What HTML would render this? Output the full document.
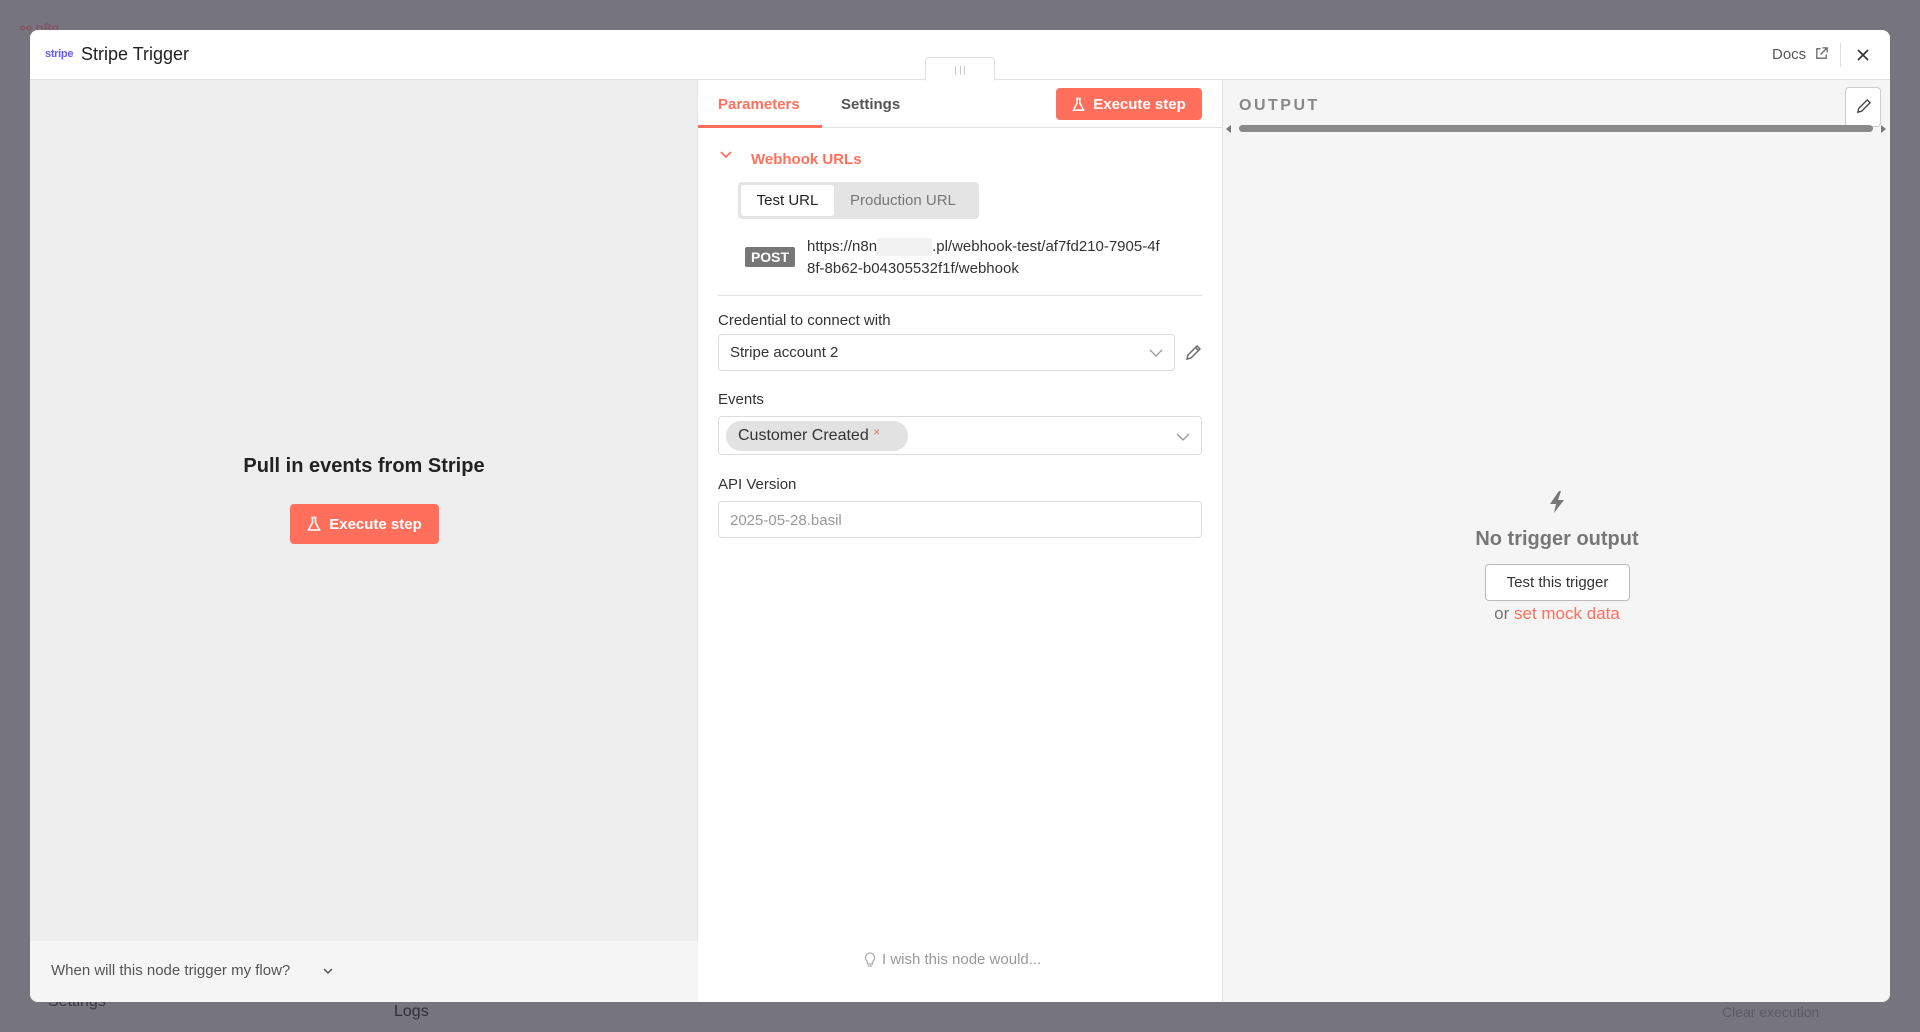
<!DOCTYPE html>
<html><head><meta charset="utf-8">
<style>
*{box-sizing:border-box;margin:0;padding:0}
body{width:1920px;height:1032px;overflow:hidden;background:#76757f;font-family:"Liberation Sans",Arial,sans-serif;position:relative;color:#333}
.abs{position:absolute}
.modal{left:30px;top:30px;width:1860px;height:972px;background:#fff;border-radius:8px;overflow:hidden}
.hdr{left:0;top:0;width:1860px;height:50px;border-bottom:1px solid #e0e0e0;background:#fff}
.left{left:0;top:50px;width:668px;height:922px;background:#eeeeee;border-right:1px solid #e3e3e3}
.lfoot{left:0;top:911px;width:668px;height:61px;background:#f5f5f5}
.mid{left:668px;top:50px;width:524px;height:922px;background:#fff}
.right{left:1192px;top:50px;width:668px;height:922px;background:#f5f5f5;border-left:1px solid #e3e3e3}
.btn{background:#ff6f5c;color:#fff;font-weight:bold;font-size:15px;border-radius:4px;display:flex;align-items:center;justify-content:center;gap:8px}
.inp{border:1px solid #dcdcdc;border-radius:4px;background:#fff}
.lbl{font-size:15px;color:#333}
</style></head><body>
<div class="abs" style="left:20px;top:20px;color:#8a4b5a;font-size:14px">⚯ n8n</div>
<div class="abs" style="left:394px;top:1003px;font-size:16px;color:#2f2f36">Logs</div>
<div class="abs" style="left:48px;top:993px;font-size:16px;color:#3a3a42">Settings</div>
<div class="abs" style="left:1722px;top:1004px;font-size:14px;color:#5a5a62">Clear execution</div>

<div class="abs modal">
  <div class="abs hdr">
    <div class="abs" style="left:15px;top:18px;font-size:11px;font-weight:bold;color:#635bff;letter-spacing:-0.3px">stripe</div>
    <div class="abs" style="left:51px;top:14px;font-size:18px;color:#222">Stripe Trigger</div>
    <div class="abs" style="left:1742px;top:16px;font-size:15px;color:#555">Docs</div>
    <svg class="abs" style="left:1784px;top:16px" width="15" height="15" viewBox="0 0 16 16" fill="none" stroke="#666" stroke-width="1.4"><path d="M7 3H3v10h10V9M9 2h5v5M14 2L7 9"/></svg>
    <div class="abs" style="left:1810px;top:13px;width:1px;height:24px;background:#ddd"></div>
    <svg class="abs" style="left:1826px;top:18px" width="14" height="14" viewBox="0 0 14 14" stroke="#333" stroke-width="1.6"><path d="M2 2l10 10M12 2L2 12"/></svg>
  </div>
  <div class="abs" style="left:895px;top:27px;width:70px;height:24px;background:#fff;border:1px solid #e0e0e0;border-bottom:none;border-radius:4px 4px 0 0;z-index:3">
    <div style="position:absolute;left:29px;top:8px;width:10px;height:9px;border-left:1px solid #ccc;border-right:1px solid #ccc"></div>
    <div style="position:absolute;left:34px;top:8px;width:1px;height:9px;background:#ccc"></div>
  </div>

  <div class="abs left">
    <div class="abs" style="left:0;top:375px;width:668px;text-align:center;font-size:20px;font-weight:bold;color:#222">Pull in events from Stripe</div>
    <div class="abs btn" style="left:260px;top:424px;width:149px;height:40px">
      <svg width="14" height="16" viewBox="0 0 14 16" fill="none" stroke="#fff" stroke-width="1.6"><path d="M4.5 1.5h5M5.5 1.5v5L1.5 14h11l-4-7.5v-5"/></svg>Execute step</div>
  </div>
  <div class="abs lfoot">
    <div class="abs" style="left:21px;top:21px;font-size:15px;color:#555">When will this node trigger my flow?</div>
    <svg class="abs" style="left:292px;top:25px" width="12" height="10" viewBox="0 0 12 10" fill="none" stroke="#555" stroke-width="1.5"><path d="M2 3l4 4 4-4"/></svg>
  </div>

  <div class="abs mid">
    <div class="abs" style="left:0;top:47px;width:524px;height:1px;background:#e3e3e3"></div>
    <div class="abs" style="left:20px;top:16px;font-size:15px;font-weight:bold;color:#ff6f5c">Parameters</div>
    <div class="abs" style="left:0;top:45px;width:124px;height:3px;background:#ff6f5c"></div>
    <div class="abs" style="left:143px;top:16px;font-size:15px;font-weight:bold;color:#555">Settings</div>
    <div class="abs btn" style="left:358px;top:8px;width:146px;height:32px">
      <svg width="13" height="15" viewBox="0 0 14 16" fill="none" stroke="#fff" stroke-width="1.6"><path d="M4.5 1.5h5M5.5 1.5v5L1.5 14h11l-4-7.5v-5"/></svg>Execute step</div>

    <svg class="abs" style="left:21px;top:70px" width="14" height="10" viewBox="0 0 14 10" fill="none" stroke="#ff6f5c" stroke-width="1.8"><path d="M2 2l5 5 5-5"/></svg>
    <div class="abs" style="left:53px;top:71px;font-size:15px;font-weight:bold;color:#ff6f5c">Webhook URLs</div>
    <div class="abs" style="left:40px;top:102px;width:241px;height:37px;background:#e4e4e4;border-radius:4px">
      <div class="abs" style="left:3px;top:3px;width:93px;height:31px;background:#fff;border-radius:3px;font-size:15px;color:#222;text-align:center;line-height:31px">Test URL</div>
      <div class="abs" style="left:112px;top:3px;font-size:15px;color:#777;line-height:31px">Production URL</div>
    </div>
    <div class="abs" style="left:47px;top:167px;width:50px;height:20px;background:#777;color:#fff;font-weight:bold;font-size:14px;text-align:center;line-height:20px;border-radius:2px">POST</div>
    <div class="abs" style="left:109px;top:156px;font-size:15px;color:#333;line-height:22px;width:400px">https://n8n<span style="display:inline-block;width:55px;height:18px;background:#f2f2f2;vertical-align:middle"></span>.pl/webhook-test/af7fd210-7905-4f<br>8f-8b62-b04305532f1f/webhook</div>
    <div class="abs" style="left:20px;top:215px;width:484px;height:1px;background:#e3e3e3"></div>

    <div class="abs lbl" style="left:20px;top:232px">Credential to connect with</div>
    <div class="abs inp" style="left:20px;top:254px;width:457px;height:37px">
      <div class="abs" style="left:11px;top:9px;font-size:15px;color:#333">Stripe account 2</div>
      <svg class="abs" style="left:430px;top:13px" width="14" height="10" viewBox="0 0 14 10" fill="none" stroke="#999" stroke-width="1.3"><path d="M1 2l6 6 6-6"/></svg>
    </div>
    <svg class="abs" style="left:486px;top:264px" width="18" height="18" viewBox="0 0 18 18" fill="none" stroke="#666" stroke-width="1.4"><path d="M3 15l1-4L13 2l3 3-9 9-4 1zM11.5 3.5l3 3"/></svg>

    <div class="abs lbl" style="left:20px;top:311px">Events</div>
    <div class="abs inp" style="left:20px;top:336px;width:484px;height:39px">
      <div class="abs" style="left:7px;top:4px;width:182px;height:30px;background:#e2e2e2;border-radius:15px;font-size:16px;color:#333;line-height:30px;padding-left:12px">Customer Created <span style="color:#ff6f5c;font-size:12px;vertical-align:top;line-height:22px">×</span></div>
      <svg class="abs" style="left:457px;top:15px" width="14" height="10" viewBox="0 0 14 10" fill="none" stroke="#999" stroke-width="1.3"><path d="M1 2l6 6 6-6"/></svg>
    </div>

    <div class="abs lbl" style="left:20px;top:396px">API Version</div>
    <div class="abs inp" style="left:20px;top:421px;width:484px;height:37px">
      <div class="abs" style="left:11px;top:10px;font-size:15px;color:#999">2025-05-28.basil</div>
    </div>

    <svg class="abs" style="left:166px;top:872px" width="12" height="16" viewBox="0 0 12 16" fill="none" stroke="#aaa" stroke-width="1.2"><path d="M3.5 10C2 8.5 1.5 7.5 1.5 5.5a4.5 4.5 0 019 0c0 2-.5 3-2 4.5V12h-5zM4 14h4"/></svg>
    <div class="abs" style="left:184px;top:871px;font-size:15px;color:#999">I wish this node would...</div>
  </div>

  <div class="abs right">
    <div class="abs" style="left:16px;top:17px;font-size:16px;font-weight:bold;color:#888;letter-spacing:2.5px">OUTPUT</div>
    <div class="abs" style="left:622px;top:7px;width:36px;height:40px;background:#fff;border:1px solid #ccc;border-radius:4px"></div>
    <svg class="abs" style="left:632px;top:18px" width="17" height="17" viewBox="0 0 18 18" fill="none" stroke="#444" stroke-width="1.4"><path d="M3 15l1-4L13 2l3 3-9 9-4 1z"/></svg>
    <div class="abs" style="left:16px;top:45px;width:634px;height:7px;background:#8a8a8a;border-radius:4px"></div>
    <div class="abs" style="left:3px;top:45px;width:0;height:0;border-top:4px solid transparent;border-bottom:4px solid transparent;border-right:5px solid #777"></div>
    <div class="abs" style="left:658px;top:45px;width:0;height:0;border-top:4px solid transparent;border-bottom:4px solid transparent;border-left:5px solid #777"></div>

    <svg class="abs" style="left:324px;top:410px" width="20" height="24" viewBox="0 0 20 24"><path d="M12 1L3 14h6l-2 9 10-13h-6l3-9z" fill="#777"/></svg>
    <div class="abs" style="left:0;top:448px;width:668px;text-align:center;font-size:20px;font-weight:bold;color:#777">No trigger output</div>
    <div class="abs" style="left:262px;top:484px;width:145px;height:37px;background:#fff;border:1px solid #bbb;border-radius:4px;font-size:15px;color:#333;text-align:center;line-height:35px">Test this trigger</div>
    <div class="abs" style="left:0;top:524px;width:668px;text-align:center;font-size:17px;color:#777">or <span style="color:#ff6f5c">set mock data</span></div>
  </div>
</div>
</body></html>
